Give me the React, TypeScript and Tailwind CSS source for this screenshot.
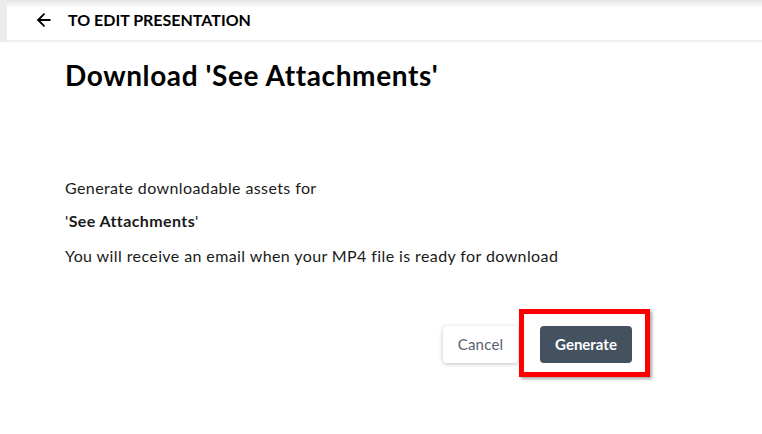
import { ArrowLeft } from "lucide-react";

const font = { fontFamily: "Lato, 'Open Sans', sans-serif" };

const App: React.FC = () => {
  return (
    <div className="min-h-[434px] w-[762px] bg-white text-[#1a1a1a]" style={font}>
      <div className="flex">
        <div className="w-[7px] shrink-0 bg-[#ececec]" />
        <div className="flex h-[42px] flex-1 items-center gap-[14px] border-b-2 border-[#efefef] bg-gradient-to-b from-[#e4e4e4] via-white via-[20%] to-white pl-[27px]">
          <ArrowLeft size={20} strokeWidth={2.2} className="text-black" />
          <span className="text-[16px] font-bold text-black">TO EDIT PRESENTATION</span>
        </div>
      </div>

      <div className="pl-[65px] pr-[130px]">
        <h1 className="mt-[15px] text-[28px] font-bold leading-[36px] tracking-[0.6px] text-black">
          Download 'See Attachments'
        </h1>

        <div className="mt-[84px] text-[16px] leading-[22px] tracking-[0.4px]">
          <p>Generate downloadable assets for</p>
          <p className="mt-[11px]">
            '<span className="font-bold">See Attachments</span>'
          </p>
          <p className="mt-[13px]">You will receive an email when your MP4 file is ready for download</p>
        </div>

        <div className="mt-[59px] flex justify-end gap-[22px]">
          <button className="h-[37px] w-[75px] rounded-[4px] bg-white text-[15px] tracking-[0.2px] text-[#566270] shadow-[0_1px_4px_rgba(0,0,0,0.25)]">
            Cancel
          </button>
          <div className="relative">
            <button className="h-[37px] w-[92px] rounded-[4px] bg-[#44525f] text-[15px] font-bold text-white">
              Generate
            </button>
            <div className="pointer-events-none absolute left-[-21px] top-[-17px] h-[68px] w-[131px] border-[5px] border-[#ff0000] shadow-[2px_2px_3px_rgba(0,0,0,0.35)]" />
          </div>
        </div>
      </div>
    </div>
  );
};

export default App;
